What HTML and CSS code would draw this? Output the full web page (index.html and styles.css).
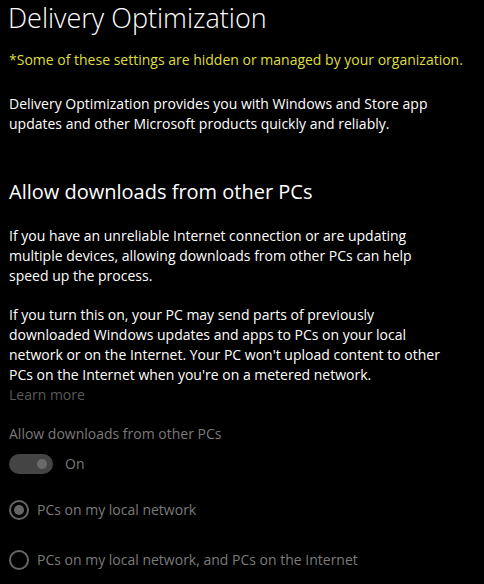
FILE: index.html
```html
<!DOCTYPE html>
<html lang="en">
<head>
  <meta charset="UTF-8">
  <title>Delivery Optimization</title>
  <link rel="stylesheet" href="styles.css">
</head>
<body>
  <h1 class="page-title">Delivery Optimization</h1>
  <p class="policy-note">*Some of these settings are hidden or managed by your organization.</p>
  <p class="intro">Delivery Optimization provides you with Windows and Store app updates and other Microsoft products quickly and reliably.</p>

  <h2 class="section-title">Allow downloads from other PCs</h2>
  <p class="desc">If you have an unreliable Internet connection or are updating multiple devices, allowing downloads from other PCs can help speed up the process.</p>
  <p class="desc desc-long">If you turn this on, your PC may send parts of previously downloaded Windows updates and apps to PCs on your local network or on the Internet. Your PC won't upload content to other PCs on the Internet when you're on a metered network.</p>
  <a class="learn-more">Learn more</a>

  <div class="setting-label">Allow downloads from other PCs</div>
  <div class="toggle-row">
    <span class="toggle"><span class="knob"></span></span>
    <span class="toggle-text">On</span>
  </div>

  <div class="radio-row first">
    <span class="radio checked"></span>
    <span class="radio-text">PCs on my local network</span>
  </div>
  <div class="radio-row second">
    <span class="radio"></span>
    <span class="radio-text">PCs on my local network, and PCs on the Internet</span>
  </div>
</body>
</html>
```

FILE: styles.css
```css
body {
  margin: 0;
  padding: 0 9px;
  background-color: #000;
  color: #fff;
  font-family: "Open Sans", "Noto Sans", sans-serif;
  font-size: 14px;
  line-height: 20px;
  overflow: hidden;
}
p {
  margin: 0;
}
.page-title {
  margin: 0 0 0 -1px;
  font-size: 27px;
  font-weight: 300;
  line-height: 36px;
}
.policy-note {
  margin-top: 14px;
  color: #dede3e;
}
.intro {
  margin-top: 24px;
  max-width: 436px;
}
.section-title {
  margin: 44px 0 0;
  font-size: 20px;
  font-weight: 400;
  line-height: 28px;
}
.desc {
  margin-top: 20px;
  max-width: 436px;
}
.desc-long {
  margin-top: 19px;
}
.learn-more {
  display: block;
  color: #5a5a5a;
}
.setting-label {
  margin-top: 19px;
  color: #7a7a7a;
}
.toggle-row {
  margin-top: 10px;
  display: flex;
  align-items: center;
  height: 20px;
}
.toggle {
  width: 44px;
  height: 20px;
  border-radius: 10px;
  background-color: #444;
  display: flex;
  align-items: center;
  justify-content: flex-end;
  padding-right: 6px;
  box-sizing: border-box;
}
.knob {
  width: 10px;
  height: 10px;
  border-radius: 50%;
  background-color: #6a6a6a;
}
.toggle-text {
  margin-left: 12px;
  color: #7a7a7a;
}
.radio-row {
  display: flex;
  align-items: center;
  height: 20px;
  color: #7a7a7a;
}
.radio-row.first {
  margin-top: 26px;
}
.radio-row.second {
  margin-top: 30px;
}
.radio {
  width: 20px;
  height: 20px;
  border: 2px solid #666;
  border-radius: 50%;
  box-sizing: border-box;
  display: flex;
  align-items: center;
  justify-content: center;
}
.radio.checked::after {
  content: "";
  width: 10px;
  height: 10px;
  border-radius: 50%;
  background-color: #666;
}
.radio-text {
  margin-left: 8px;
}
```
